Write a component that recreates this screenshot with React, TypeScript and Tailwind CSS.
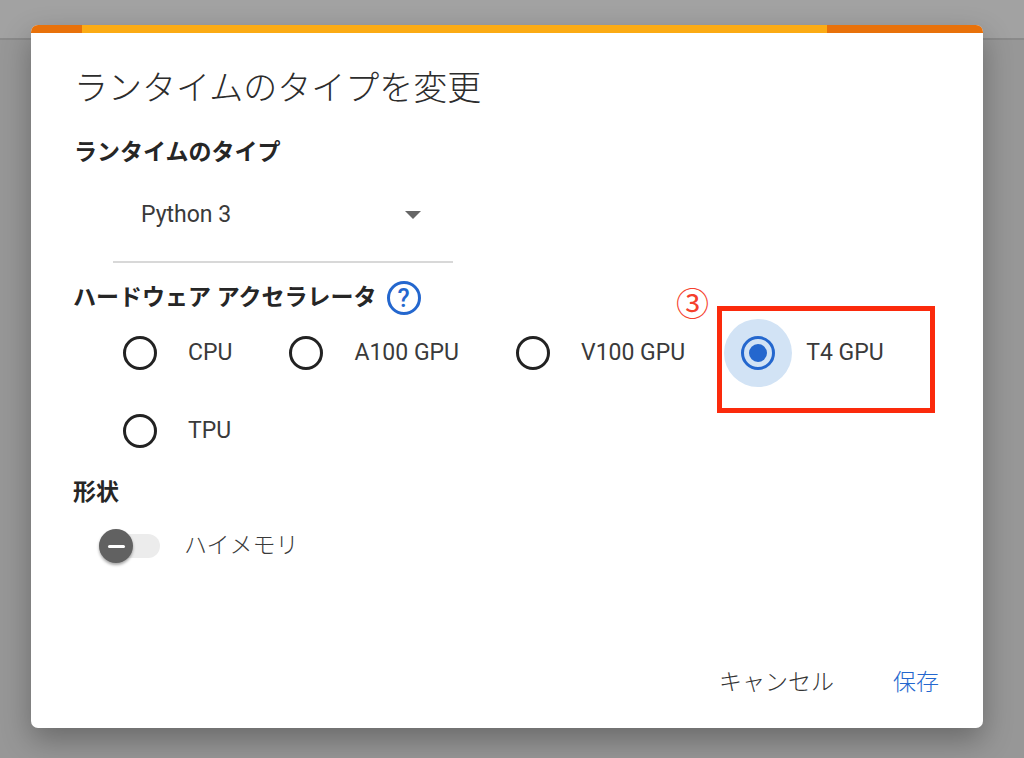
import React from "react";

const jp = "font-['Roboto','Noto_Sans_CJK_JP',sans-serif]";

function Radio({ label, gap, selected }: { label: string; gap: string; selected?: boolean }) {
  return (
    <div className={`flex items-center ${gap}`}>
      <div className="relative flex h-[34px] w-[34px] items-center justify-center">
        {selected && <div className="absolute left-[-17px] top-[-17px] h-[68px] w-[68px] rounded-full bg-[#d2e3f5]" />}
        <div className={`relative flex h-[34px] w-[34px] items-center justify-center rounded-full border-[3px] ${selected ? "border-[#2467ce]" : "border-[#222222]"}`}>
          {selected && <div className="h-[18px] w-[18px] rounded-full bg-[#2467ce]" />}
        </div>
      </div>
      <span className="text-[23px] leading-[28px] text-[#3a3a3a]">{label}</span>
    </div>
  );
}

export default function App() {
  return (
    <div className={`relative h-[758px] w-[1024px] overflow-hidden bg-[#979797] ${jp}`}>
      <div className="h-[40px] border-b-2 border-[#8a8a8a] bg-[#a2a2a2]" />
      <div className="absolute left-[31px] top-[25px] flex h-[703px] w-[952px] flex-col overflow-hidden rounded-[7px] bg-white shadow-[0_12px_30px_rgba(0,0,0,0.3)]">
        <div className="flex h-[8px] shrink-0">
          <div className="w-[51px] bg-[#e8710a]" />
          <div className="w-[745px] bg-[#fbab14]" />
          <div className="flex-1 bg-[#e8710a]" />
        </div>
        <div className="relative flex flex-1 flex-col pl-[42px]">
          <h1 className="mt-[34px] pl-[1px] text-[34px] font-light leading-[42px] text-[#2c2c2c]">ランタイムのタイプを変更</h1>
          <h2 className="mt-[30px] pl-[1px] text-[23px] font-bold leading-[28px] text-[#262626]">ランタイムのタイプ</h2>
          <div className="ml-[40px] mt-[12px] flex h-[84px] w-[340px] items-center justify-between border-b-2 border-[#d8d8d8] pl-[28px] pr-[32px] pb-[10px]">
            <span className="text-[23px] leading-[28px] text-[#3a3a3a]">Python 3</span>
            <div className="h-0 w-0 border-x-[8px] border-t-[8px] border-x-transparent border-t-[#666666]" />
          </div>
          <div className="mt-[18px] flex items-center gap-[10px]">
            <h2 className="text-[23px] font-bold leading-[34px] text-[#262626]">ハードウェア アクセラレータ</h2>
            <div className="flex h-[34px] w-[34px] items-center justify-center rounded-full border-[3px] border-[#2467ce] text-[25px] font-medium leading-none text-[#2467ce]">?</div>
          </div>
          <div className="ml-[50px] mt-[21px] flex items-center">
            <Radio label="CPU" gap="gap-[31px]" />
            <div className="ml-[57px]"><Radio label="A100 GPU" gap="gap-[31px]" /></div>
            <div className="ml-[57px]"><Radio label="V100 GPU" gap="gap-[31px]" /></div>
            <div className="ml-[56px]"><Radio label="T4 GPU" gap="gap-[31px]" selected /></div>
          </div>
          <div className="ml-[50px] mt-[44px]"><Radio label="TPU" gap="gap-[31px]" /></div>
          <h2 className="mt-[31px] text-[23px] font-bold leading-[28px] text-[#262626]">形状</h2>
          <div className="ml-[26px] mt-[25px] flex items-center gap-[24px]">
            <div className="relative h-[24px] w-[61px] rounded-full bg-[#ececec]">
              <div className="absolute left-0 top-[-5px] flex h-[34px] w-[34px] items-center justify-center rounded-full bg-[#616161] shadow-[0_2px_3px_rgba(0,0,0,0.35)]">
                <div className="h-[3px] w-[17px] rounded-full bg-white" />
              </div>
            </div>
            <span className="text-[23px] font-light leading-[28px] text-[#3a3a3a]">ハイメモリ</span>
          </div>
          <div className="mt-auto mb-[31px] mr-[44px] flex justify-end gap-[59px]">
            <span className="text-[23px] font-light leading-[28px] text-[#333333]">キャンセル</span>
            <span className="text-[23px] font-light leading-[28px] text-[#2467ce]">保存</span>
          </div>
          <div className="absolute left-[645px] top-[252px] text-[33px] leading-[40px] text-[#f5402c]">③</div>
          <div className="absolute left-[686px] top-[273px] h-[107px] w-[218px] border-[5px] border-[#fb2a0c]" />
        </div>
      </div>
    </div>
  );
}
